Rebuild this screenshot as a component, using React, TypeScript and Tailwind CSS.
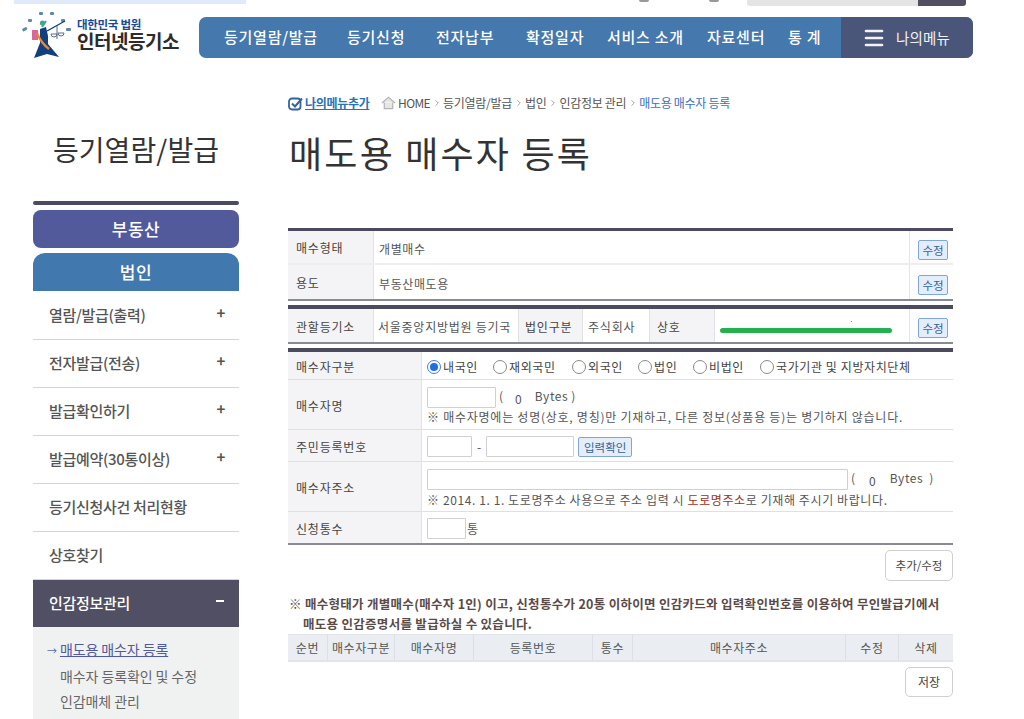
import { Menu, ChevronRight } from 'lucide-react';

const font = { fontFamily: '"Noto Sans CJK KR", "Noto Sans", sans-serif' };

const navItems = [
  { label: '등기열람/발급', cls: 'w-[148px] pl-[25px]' },
  { label: '등기신청', cls: 'w-[89px]' },
  { label: '전자납부', cls: 'w-[90px]' },
  { label: '확정일자', cls: 'w-[81px]' },
  { label: '서비스 소개', cls: 'w-[100px]' },
  { label: '자료센터', cls: 'w-[81px]' },
  { label: '통 계', cls: 'w-[53px]' },
];

const sideItems = [
  { label: '열람/발급(출력)', plus: true },
  { label: '전자발급(전송)', plus: true },
  { label: '발급확인하기', plus: true },
  { label: '발급예약(30통이상)', plus: true },
  { label: '등기신청사건 처리현황', plus: false },
  { label: '상호찾기', plus: false },
];

const crumbs = ['등기열람/발급', '법인', '인감정보 관리'];

function Logo() {
  return (
    <div className="flex items-start w-[179px] pl-[20px] h-[50px]">
      <svg width="52" height="50" viewBox="0 0 52 50" className="shrink-0 -mt-[3px]">
        <g fill="#5f86b4">
          <rect x="2" y="18" width="5" height="3" rx="1" transform="rotate(-30 4 19)" />
          <rect x="8" y="9" width="4" height="3" rx="1" />
          <rect x="19" y="2" width="4" height="3" rx="1" />
          <rect x="30" y="2" width="4" height="3" rx="1" />
          <rect x="41" y="9" width="4" height="3" rx="1" />
          <rect x="46" y="18" width="5" height="3" rx="1" />
        </g>
        <rect x="12" y="20" width="6" height="10" fill="#d9679a" />
        <path d="M20 19 L26 17 L28 26 L28 34 L39 47 L27 44 L14 48 L20 33 Z" fill="#12407f" />
        <path d="M17 23 Q21 33 29 39" stroke="#ea8a2a" strokeWidth="2.2" fill="none" />
        <circle cx="22.5" cy="13" r="2.6" fill="#3fa58e" />
        <path d="M22 17 L26 11" stroke="#3fa58e" strokeWidth="2" />
        <path d="M27 21 L45 11" stroke="#12407f" strokeWidth="1.4" />
        <path d="M37 16 V29" stroke="#5a6f8a" strokeWidth="1" />
        <path d="M31 24 a3 3 0 0 0 6 0 Z M38 23 a3 3 0 0 0 6 0 Z" stroke="#5a6f8a" strokeWidth="1" fill="none" />
      </svg>
      <div className="flex flex-col ml-[5px] pt-[4px]">
        <span className="text-[11.5px] leading-[14px] font-bold text-[#1d4a8f] tracking-[-0.3px] whitespace-nowrap">대한민국 법원</span>
        <span className="text-[19px] leading-[22px] -mt-[1px] font-bold text-[#2c2c2c] tracking-[-0.5px] whitespace-nowrap">인터넷등기소</span>
      </div>
    </div>
  );
}

function EditBtn() {
  return (
    <button className="w-[30px] h-[20px] border border-[#7fa6d6] bg-[#e4eefa] rounded-[2px] text-[11.5px] leading-[18px] text-[#33619c] text-center">
      수정
    </button>
  );
}

function EditCell({ className = 'pt-[5px]' }: { className?: string }) {
  return (
    <div className={`${className} w-[44px] border-l border-[#e6e6e6] bg-[#fdfdfd] flex items-center justify-end pr-[5px]`}>
      <EditBtn />
    </div>
  );
}

function Label({ children, className = 'w-[86px] pl-[8px]' }: { children: React.ReactNode; className?: string }) {
  return (
    <div className={`${className} shrink-0 bg-[#f4f4f6] border-r border-[#e2e2e6] flex items-center pt-[2px] text-[12px] text-[#444] tracking-[0.8px] whitespace-nowrap`}>
      {children}
    </div>
  );
}

function Radio({ label, checked, className }: { label: string; checked?: boolean; className: string }) {
  return (
    <span className={`${className} flex items-center gap-[2px] text-[12px] text-[#444] tracking-[0.6px] whitespace-nowrap`}>
      <span className={`w-[14px] h-[14px] rounded-full border flex items-center justify-center bg-white ${checked ? 'border-[#3b82e0]' : 'border-[#8a8a8a]'}`}>
        {checked && <span className="w-[8px] h-[8px] rounded-full bg-[#1f6fe0]" />}
      </span>
      {label}
    </span>
  );
}

function TextInput({ className }: { className: string }) {
  return <div className={`${className} h-[21px] border border-[#d0d0d4] bg-white rounded-[1px] shrink-0`} />;
}

function InfoTables() {
  return (
    <>
      <div className="mt-[51px] border-t-[3px] border-[#4c4a5e] border-b-[2px] border-b-[#8a8a96]">
        <div className="flex h-[34px] border-b-2 border-[#eeeeee]">
          <Label>매수형태</Label>
          <div className="flex-1 flex items-center pl-[5px] pt-[3px] text-[12px] text-[#555] tracking-[0.6px]">개별매수</div>
          <EditCell />
        </div>
        <div className="flex h-[34px]">
          <Label>용도</Label>
          <div className="flex-1 flex items-center pl-[5px] pt-[3px] text-[12px] text-[#555] tracking-[0.6px]">부동산매도용</div>
          <EditCell />
        </div>
      </div>

      <div className="mt-[4px] border-t-[4px] border-[#4c4a5e] border-b-[2px] border-b-[#8a8a96] flex h-[39px]">
        <Label>관할등기소</Label>
        <div className="w-[144px] flex items-center pl-[4px] pt-[2px] text-[12px] text-[#555] tracking-[0.75px] whitespace-nowrap">서울중앙지방법원 등기국</div>
        <Label className="w-[65px] pl-[6px] border-l border-[#e2e2e6]">법인구분</Label>
        <div className="w-[66px] flex items-center pl-[5px] pt-[2px] text-[12px] text-[#555] tracking-[0.8px] whitespace-nowrap">주식회사</div>
        <Label className="w-[66px] pl-[7px] border-l border-[#e2e2e6]">상호</Label>
        <div className="flex-1 relative">
          <div className="absolute left-[136px] top-[12px] w-[1px] h-[1px] bg-[#888]" />
          <div className="absolute left-[5px] top-[19px] w-[172px] h-[5px] rounded-full bg-[#22b14c]" />
        </div>
        <EditCell className="pt-[4px]" />
      </div>

      <div className="mt-[4px] border-t-[4px] border-[#4c4a5e] border-b-[2px] border-b-[#8a8a96]">
        <div className="flex h-[28px] border-b border-[#e0e0e4]">
          <Label className="w-[134px] pl-[8px]">매수자구분</Label>
          <div className="flex-1 flex items-center pl-[5px] pt-[2px]">
            <Radio checked label="내국인" className="w-[66px]" />
            <Radio label="재외국민" className="w-[79px]" />
            <Radio label="외국인" className="w-[66px]" />
            <Radio label="법인" className="w-[55px]" />
            <Radio label="비법인" className="w-[67px]" />
            <Radio label="국가기관 및 지방자치단체" className="" />
          </div>
        </div>
        <div className="flex h-[50px] border-b border-[#e0e0e4]">
          <Label className="w-[134px] pl-[8px]">매수자명</Label>
          <div className="flex-1 pl-[5px] pt-[7px] flex flex-col">
            <div className="flex items-center text-[12px] text-[#555]">
              <TextInput className="w-[69px]" />
              <span className="ml-[3px] -mt-[3px]">(</span>
              <span className="ml-[12px] mt-[2px]">0</span>
              <span className="ml-[13px] -mt-[3px] tracking-[0.6px]">Bytes</span>
              <span className="ml-[3px] -mt-[3px]">)</span>
            </div>
            <div className="mt-[1px] text-[12px] leading-[16px] text-[#555] tracking-[0.75px] whitespace-nowrap">※ 매수자명에는 성명(상호, 명칭)만 기재하고, 다른 정보(상품용 등)는 병기하지 않습니다.</div>
          </div>
        </div>
        <div className="flex h-[32px] border-b border-[#e0e0e4]">
          <Label className="w-[134px] pl-[8px]">주민등록번호</Label>
          <div className="flex-1 pl-[5px] pt-[2px] flex items-center text-[12px] text-[#555]">
            <TextInput className="w-[45px]" />
            <span className="mx-[5px]">-</span>
            <TextInput className="w-[88px]" />
            <button className="ml-[4px] w-[54px] h-[20px] border border-[#7fa6d6] bg-[#e4eefa] rounded-[2px] text-[11.5px] leading-[18px] text-[#33619c] whitespace-nowrap">입력확인</button>
          </div>
        </div>
        <div className="flex h-[50px] border-b border-[#e0e0e4]">
          <Label className="w-[134px] pl-[8px]">매수자주소</Label>
          <div className="flex-1 pl-[5px] pt-[7px] flex flex-col">
            <div className="flex items-center text-[12px] text-[#555]">
              <TextInput className="w-[421px]" />
              <span className="ml-[3px] -mt-[3px]">(</span>
              <span className="ml-[14px] mt-[2px]">0</span>
              <span className="ml-[14px] -mt-[3px] tracking-[0.6px]">Bytes</span>
              <span className="ml-[6px] -mt-[3px]">)</span>
            </div>
            <div className="mt-[2px] text-[12px] leading-[16px] text-[#555] tracking-[0.6px] whitespace-nowrap">
              ※ 2014. 1. 1. 도로명주소 사용으로 주소 입력 시 <span className="text-[#a03020]">도로명주소</span>로 기재해 주시기 바랍니다.
            </div>
          </div>
        </div>
        <div className="flex h-[31px]">
          <Label className="w-[134px] pl-[8px]">신청통수</Label>
          <div className="flex-1 pl-[5px] pt-[2px] flex items-center text-[12px] text-[#555]">
            <TextInput className="w-[39px]" />
            <span className="ml-[1px]">통</span>
          </div>
        </div>
      </div>
    </>
  );
}

const listCols = [
  { label: '순번', cls: 'w-[40px]' },
  { label: '매수자구분', cls: 'w-[67px]' },
  { label: '매수자명', cls: 'w-[79px]' },
  { label: '등록번호', cls: 'w-[119px]' },
  { label: '통수', cls: 'w-[40px]' },
  { label: '매수자주소', cls: 'w-[213px]' },
  { label: '수정', cls: 'w-[53px]' },
  { label: '삭제', cls: 'flex-1' },
];

export default function App() {
  return (
    <div className="w-[1024px] h-[719px] overflow-hidden bg-white" style={font}>
      <div className="flex h-[6px]">
        <div className="ml-[14px] w-[232px] h-[4px] bg-[#dfeafb]" />
        <div className="ml-[393px] w-[10px] h-[2px] rounded-b-full bg-[#999]" />
        <div className="ml-[60px] w-[10px] h-[2px] rounded-b-full bg-[#999]" />
        <div className="ml-[28px] w-[171px] h-[6px] bg-[#e4e4e4] rounded-bl-[3px]" />
        <div className="w-[48px] h-[6px] bg-[#524f63] rounded-br-[3px]" />
      </div>

      <header className="flex mt-[7px] h-[50px] items-end">
        <Logo />
        <nav className="ml-[20px] w-[774px] h-[41px] mb-[5px] flex rounded-[7px] overflow-hidden bg-[#4578ad]">
          {navItems.map((n) => (
            <a key={n.label} className={`${n.cls} h-full flex items-center text-white text-[15px] font-medium tracking-[0.75px] whitespace-nowrap`}>
              {n.label}
            </a>
          ))}
          <div className="flex-1 bg-[#4a5679] flex items-center pl-[21px] text-[#f2f2f2] text-[14.5px] tracking-[0.2px]">
            <Menu size={24} strokeWidth={2.6} className="mr-[10px]" />
            나의메뉴
          </div>
        </nav>
      </header>

      <div className="flex mt-[25px]">
        <aside className="ml-[33px] w-[206px] shrink-0">
          <h2 className="mt-[41px] text-center text-[28px] leading-[40px] text-[#333] tracking-[0.1px] whitespace-nowrap">등기열람/발급</h2>
          <div className="mt-[32px] h-[4px] rounded-full bg-[#4c4a5e]" />
          <div className="mt-[5px] h-[38px] rounded-[8px] bg-[#535a9c] text-white text-[17px] font-medium tracking-[0.5px] flex items-center justify-center">부동산</div>
          <div className="mt-[5px] mb-[1px] h-[38px] rounded-t-[12px] bg-[#4178ad] text-white text-[17px] font-medium tracking-[0.5px] flex items-center justify-center">법인</div>
          {sideItems.map((s) => (
            <div key={s.label} className="h-[48px] border-b border-[#d4d4d4] flex items-center pl-[16px] pr-[14px] text-[15px] font-medium text-[#555] tracking-[-0.3px] whitespace-nowrap">
              <span className="flex-1">{s.label}</span>
              {s.plus && <span className="text-[15px] font-bold leading-none -mt-[6px] text-[#555]">+</span>}
            </div>
          ))}
          <div className="h-[47px] bg-[#514f63] flex items-center pl-[16px] pr-[15px] text-[15px] font-medium text-white tracking-[-0.3px]">
            <span className="flex-1">인감정보관리</span>
            <span className="w-[8px] h-[2px] bg-white -mt-[6px]" />
          </div>
          <div className="bg-[#f0f2f2] pt-[10px] pb-[12px] pl-[14px] text-[14px] text-[#666] leading-[25.5px] tracking-[-0.1px]">
            <div className="whitespace-nowrap">
              <span className="text-[#5a6aa8] text-[10px] mr-[3px]">→</span>
              <span className="text-[#535a9c] underline">매도용 매수자 등록</span>
            </div>
            <div className="pl-[13px]">매수자 등록확인 및 수정</div>
            <div className="pl-[13px]">인감매체 관리</div>
          </div>
        </aside>

        <main className="ml-[49px] w-[665px] shrink-0">
          <div className="flex items-center h-[20px] mt-[5px] text-[12px] text-[#555] tracking-[-0.3px] whitespace-nowrap">
            <svg width="15" height="15" viewBox="0 0 15 15" className="mr-[2px]">
              <rect x="1" y="2.5" width="11.5" height="11" rx="3" stroke="#35639c" strokeWidth="1.8" fill="none" />
              <path d="M4 7.5 L7 10.5 L14 2.5" stroke="#35639c" strokeWidth="2" fill="none" />
            </svg>
            <span className="font-bold text-[#2b72b5] underline w-[63px]">나의메뉴추가</span>
            <svg width="15" height="14" viewBox="0 0 16 14" className="ml-[13px] mr-[2px]">
              <path d="M1 7 L8 1 L15 7 M3.5 6.5 V13 H12.5 V6.5" stroke="#b5b5b5" strokeWidth="1.3" fill="#e6e6e6" />
            </svg>
            <span className="tracking-[-0.6px]">HOME</span>
            {crumbs.map((c) => (
              <span key={c} className="flex items-center">
                <ChevronRight size={10} strokeWidth={1.6} className="mx-[1px] ml-[2px] text-[#777]" />
                <span>{c}</span>
              </span>
            ))}
            <ChevronRight size={10} strokeWidth={1.6} className="mx-[1px] ml-[2px] text-[#777]" />
            <span className="text-[#3a70c0]">매도용 매수자 등록</span>
          </div>
          <h1 className="mt-[14px] ml-[1px] text-[36px] leading-[50px] text-[#333] tracking-[2.2px] whitespace-nowrap">매도용 매수자 등록</h1>

          <InfoTables />

          <div className="flex justify-end mt-[5px]">
            <button className="w-[68px] h-[31px] border border-[#cfcfcf] rounded-[5px] text-[11.5px] text-[#444]">추가/수정</button>
          </div>

          <div className="mt-[13px] pl-[1px] text-[12.5px] font-bold leading-[19.5px] text-[#5a4a48] tracking-[0.29px] whitespace-nowrap">
            <div>※ 매수형태가 개별매수(매수자 1인) 이고, 신청통수가 20통 이하이면 인감카드와 입력확인번호를 이용하여 무인발급기에서</div>
            <div className="pl-[14px]">매도용 인감증명서를 발급하실 수 있습니다.</div>
          </div>

          <div className="mt-[1px] h-[28px] flex bg-[#eaeef2] border-t border-b-2 border-[#e2e4e8] text-[12px] text-[#555] tracking-[0.6px]">
            {listCols.map((c) => (
              <div key={c.label} className={`${c.cls} flex items-center justify-center border-r border-[#dcdfe4] last:border-r-0 whitespace-nowrap`}>
                {c.label}
              </div>
            ))}
          </div>

          <div className="flex justify-end mt-[5px]">
            <button className="w-[48px] h-[30px] border border-[#cfcfcf] rounded-[5px] text-[12px] text-[#444]">저장</button>
          </div>
        </main>
      </div>
    </div>
  );
}
